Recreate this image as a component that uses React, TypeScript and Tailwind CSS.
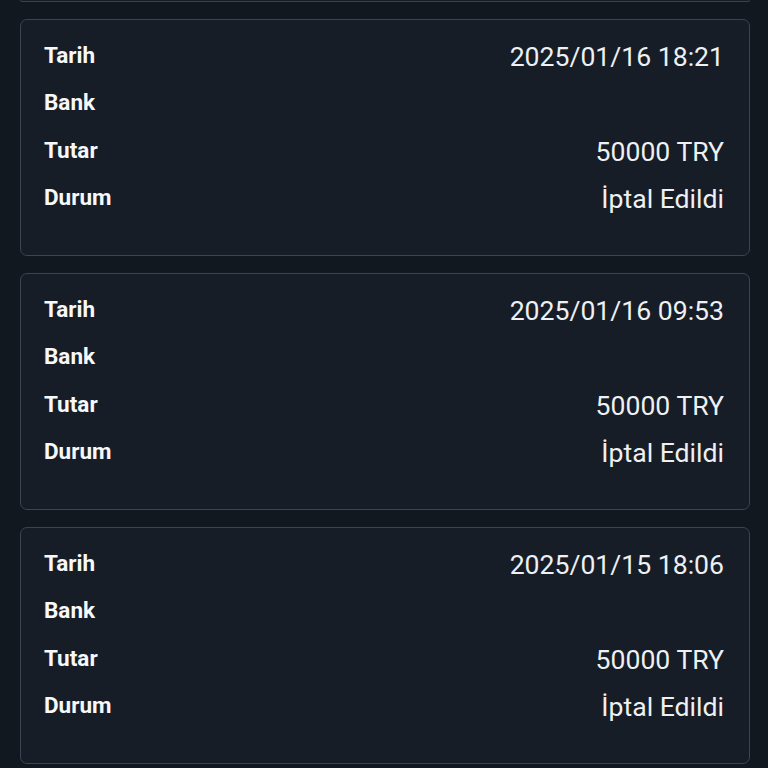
type Entry = {
  date: string;
  bank: string;
  amount: string;
  status: string;
};

const entries: Entry[] = [
  { date: "2025/01/16 18:21", bank: "", amount: "50000 TRY", status: "İptal Edildi" },
  { date: "2025/01/16 09:53", bank: "", amount: "50000 TRY", status: "İptal Edildi" },
  { date: "2025/01/15 18:06", bank: "", amount: "50000 TRY", status: "İptal Edildi" },
];

const Row = ({ label, value }: { label: string; value: string }) => (
  <div className="flex h-[47.5px] items-center justify-between">
    <span className="text-[22.5px] font-bold leading-none text-[#f7f8f9]">{label}</span>
    <span className="mt-[5px] text-[26.6px] leading-none text-[#eef0f2]">{value}</span>
  </div>
);

export default function App() {
  return (
    <main
      className="h-[768px] overflow-hidden bg-[#12181f]"
      style={{ fontFamily: "Roboto, 'Noto Sans', sans-serif" }}
    >
      <div className="flex flex-col gap-[17px] pl-5 pr-[18px]">
        {/* bottom edge of the card scrolled above */}
        <div className="h-[2px] rounded-b-[7px] border-x-[1.5px] border-b-[1.5px] border-[#38434f] bg-[#161d27]" />
        {entries.map((e, i) => (
          <article
            key={i}
            className="h-[237px] rounded-[7px] border-[1.5px] border-[#3a4551] bg-[#161d27] pl-[23px] pr-[25px] pt-[11px]"
          >
            <Row label="Tarih" value={e.date} />
            <Row label="Bank" value={e.bank} />
            <Row label="Tutar" value={e.amount} />
            <Row label="Durum" value={e.status} />
          </article>
        ))}
      </div>
    </main>
  );
}
